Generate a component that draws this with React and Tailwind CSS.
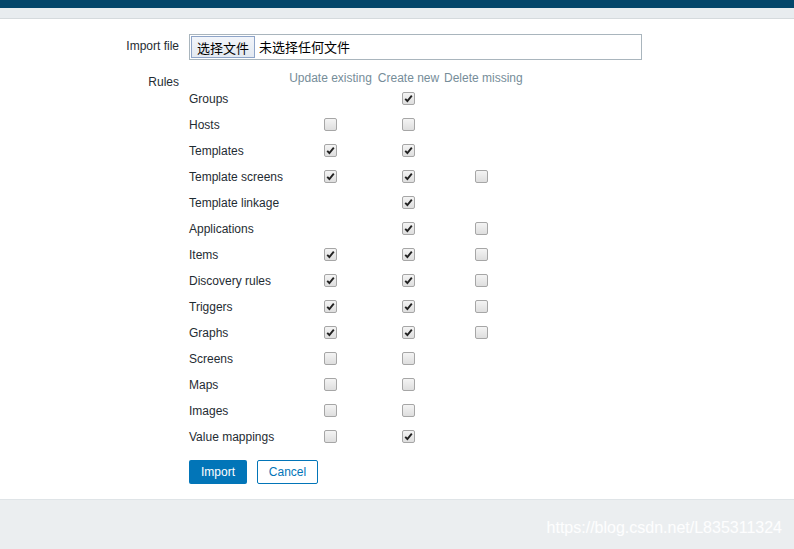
import React from "react";

const RULES = [
  { name: "Groups", u: null, c: true, d: null },
  { name: "Hosts", u: false, c: false, d: null },
  { name: "Templates", u: true, c: true, d: null },
  { name: "Template screens", u: true, c: true, d: false },
  { name: "Template linkage", u: null, c: true, d: null },
  { name: "Applications", u: null, c: true, d: false },
  { name: "Items", u: true, c: true, d: false },
  { name: "Discovery rules", u: true, c: true, d: false },
  { name: "Triggers", u: true, c: true, d: false },
  { name: "Graphs", u: true, c: true, d: false },
  { name: "Screens", u: false, c: false, d: null },
  { name: "Maps", u: false, c: false, d: null },
  { name: "Images", u: false, c: false, d: null },
  { name: "Value mappings", u: false, c: true, d: null },
];

function Box({ checked }) {
  if (checked === null) return null;
  return (
    <span className="inline-flex w-[13px] h-[13px] items-center justify-center rounded-[2px] border border-[#a6a6a6] bg-gradient-to-b from-[#f4f4f4] to-[#dedede] align-middle">
      {checked && (
        <svg width="9" height="9" viewBox="0 0 9 9">
          <path d="M1.2 4.8 L3.4 7 L7.8 1.6" fill="none" stroke="#222" strokeWidth="1.9" />
        </svg>
      )}
    </span>
  );
}

export default function App() {
  return (
    <div className="w-[794px] h-[549px] flex flex-col bg-white text-[12px] text-[#1f2c33] font-['Liberation_Sans',Arial,sans-serif] overflow-hidden">
      <div className="h-[8px] bg-[#03466a]" />
      <div className="h-[11px] bg-[#e8ecef] border-b border-[#d5dadd]" />

      <div className="flex-1 flex flex-col">
        {/* Import file */}
        <div className="flex mt-[15px] h-[26px]">
          <div className="w-[179px] text-right pt-[3px]">Import file</div>
          <div className="ml-[10px] w-[453px] h-[26px] border border-[#a9b5bd] flex items-center">
            <button className="ml-[1px] h-[22px] px-[5px] border border-[#8ea4c8] bg-gradient-to-b from-[#f2f5fa] to-[#e3e9f1] text-[13px] text-black font-['Noto_Sans_CJK_SC',sans-serif] leading-none">
              选择文件
            </button>
            <span className="ml-[4px] text-[13px] text-black font-['Noto_Sans_CJK_SC',sans-serif]">未选择任何文件</span>
          </div>
        </div>

        {/* Rules */}
        <div className="flex mt-[10px]">
          <div className="w-[179px] text-right pt-[3px]">Rules</div>
          <div className="ml-[10px] flex flex-col">
            <div className="flex h-[15px] items-center text-[#768d99] whitespace-nowrap">
              <div className="w-[100px]" />
              <div className="w-[83px] text-center">Update existing</div>
              <div className="w-[63px] ml-[5px] text-center">Create new</div>
              <div className="w-[78px] ml-[4px] text-center">Delete missing</div>
            </div>
            {RULES.map((r) => (
              <div key={r.name} className="flex h-[26px] items-center">
                <div className="w-[100px] whitespace-nowrap pt-[2px]">{r.name}</div>
                <div className="w-[83px] flex justify-center"><Box checked={r.u} /></div>
                <div className="w-[63px] ml-[5px] flex justify-center"><Box checked={r.c} /></div>
                <div className="w-[78px] ml-[4px] flex justify-start pl-[31px]"><Box checked={r.d} /></div>
              </div>
            ))}
            <div className="flex gap-[10px] mt-[11px]">
              <button className="w-[58px] h-[24px] rounded-[2px] bg-[#0275b8] text-white">Import</button>
              <button className="w-[61px] h-[24px] rounded-[2px] border border-[#0275b8] bg-white text-[#0275b8]">Cancel</button>
            </div>
          </div>
        </div>
      </div>

      <div className="h-[50px] bg-[#ebeef0] border-t border-[#dfe4e7] flex items-end justify-end pr-[12px] pb-[9px]">
        <span className="text-[16px] text-white/90">https://blog.csdn.net/L835311324</span>
      </div>
    </div>
  );
}
